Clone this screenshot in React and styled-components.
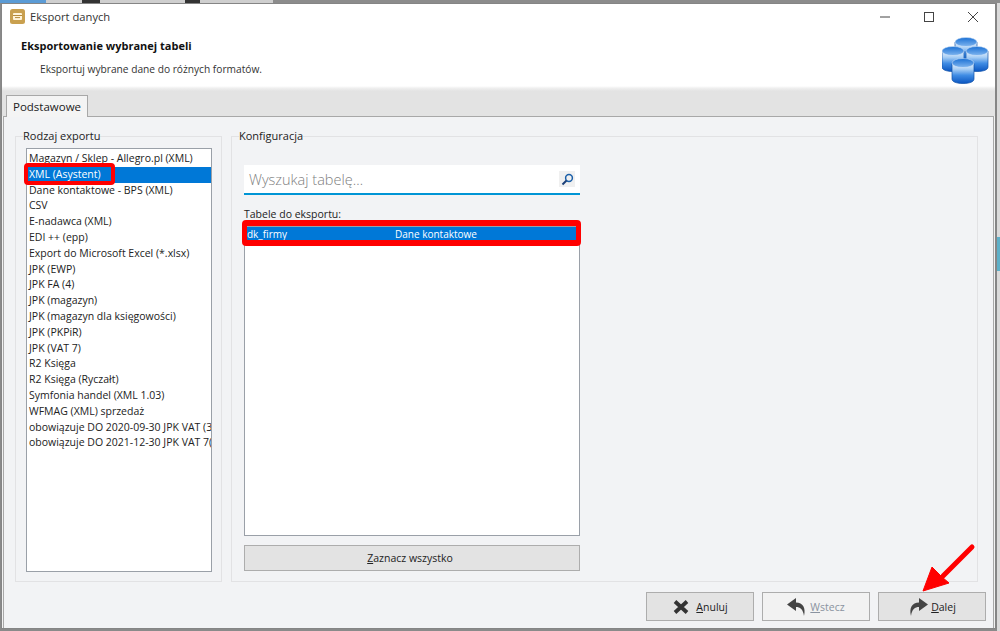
import React from 'react'
import styled, { createGlobalStyle } from 'styled-components'

const GlobalStyle = createGlobalStyle`
  html, body { margin: 0; padding: 0; }
  body {
    width: 1000px;
    height: 631px;
    overflow: hidden;
    background: #e6e6e6;
    font-family: "Open Sans", "Noto Sans", sans-serif;
    font-size: 10.5px;
    color: #222;
  }
`

// the desktop behind the dialog only shows as thin strips at the edges
const Desk = styled.div`
  position: relative;
  width: 1000px;
  height: 631px;
  box-sizing: border-box;
  padding: 3px 3px 2px 1px;
  background:
    linear-gradient(90deg, #5b9bd5 0 46px, #cfcfcf 46px 82px, #333 82px 100px, #cfcfcf 100px 185px, #333 185px 200px, #cfcfcf 200px 273px, #8c8c8c 273px) top left / 100% 3px no-repeat,
    linear-gradient(#dadada 0 237px, #5eb0c8 237px 271px, #dadada 271px) top right / 3px 100% no-repeat,
    #8a8a8a;
`

const Win = styled.div`
  height: 100%;
  box-sizing: border-box;
  border: 1px solid #858585;
  border-right-width: 2px;
  display: flex;
  flex-direction: column;
  background: #f2f2f2;
`

const Head = styled.div`
  height: 82px;
  flex: none;
  background: #fff;
  display: flex;
  flex-direction: column;
  position: relative;
`

const TitleBar = styled.div`
  height: 25px;
  display: flex;
  align-items: center;
  padding-left: 8px;
  gap: 5px;
  font-size: 11.2px;
  color: #333;
`

const WinControls = styled.div`
  margin-left: auto;
  display: flex;
  align-items: center;
  gap: 32px;
  padding-right: 16px;
`

const HeadTitle = styled.div`
  font-weight: 700;
  font-size: 11px;
  padding: 9px 0 0 19px;
  color: #111;
`

const HeadSub = styled.div`
  font-size: 10.2px;
  padding: 9px 0 0 38px;
  color: #333;
`

const DbIcon = styled.svg`
  position: absolute;
  right: 5px;
  top: 29px;
`

const TabStrip = styled.div`
  height: 30px;
  flex: none;
  box-sizing: border-box;
  padding: 5px 0 0 4px;
  background: linear-gradient(#fff 0, #f0f0f0 2px, #e3e3e3 5px);
  display: flex;
  align-items: flex-end;
`

const Tab = styled.div`
  width: 82px;
  height: 22px;
  box-sizing: border-box;
  background: #f4f4f4;
  border: 1px solid #a8a8a8;
  border-bottom: none;
  display: flex;
  align-items: center;
  justify-content: center;
  margin-bottom: -1px;
  position: relative;
  font-size: 11.5px;
`

const Panel = styled.div`
  flex: 1;
  min-height: 0;
  margin: 0 1px 0 1px;
  border: 1px solid #a8a8a8;
  border-bottom: none;
  background: #f2f3f5;
  padding: 13px 7px 0 11px;
  display: flex;
  flex-direction: column;
`

const Groups = styled.div`
  display: flex;
  gap: 9px;
  height: 452px;
  flex: none;
`

const Group = styled.fieldset`
  margin: 0;
  min-width: 0;
  box-sizing: border-box;
  height: 100%;
  border: 1px solid #e2e2e4;
  padding: 0;
  width: ${p => p.$w}px;
  position: relative;
`

const Legend = styled.legend`
  margin-left: 7px;
  padding: 0;
  font-size: 11px;
  line-height: 12px;
  height: 12px;
`

const KindList = styled.div`
  position: relative;
  margin: 6px 9px 9px 10px;
  height: 424px;
  box-sizing: border-box;
  border: 1px solid #9aa0a8;
  background: #fff;
  padding-top: 2px;
`

const KindRow = styled.div`
  height: 15.8px;
  line-height: 15.8px;
  padding-left: 2px;
  white-space: nowrap;
  overflow: hidden;
  background: ${p => (p.$on ? '#0078d7' : 'transparent')};
  color: ${p => (p.$on ? '#fff' : '#222')};
`

const RedBox = styled.div`
  position: absolute;
  border: 4px solid #f00;
  border-radius: 4px;
  box-sizing: border-box;
`

const KindMark = styled(RedBox)`
  left: -3px;
  top: 14px;
  width: 91px;
  height: 22px;
`

const ConfigBody = styled.div`
  padding: 23px 0 0 12px;
  width: 336px;
  display: flex;
  flex-direction: column;
`

const Search = styled.div`
  height: 30px;
  box-sizing: border-box;
  background: #fff;
  border-bottom: 2px solid #0095d5;
  display: flex;
  align-items: center;
  justify-content: space-between;
  padding: 0 5px;
  font-size: 14.5px;
  font-weight: 300;
  color: #808080;
`

const SearchBtn = styled.div`
  width: 16px;
  height: 16px;
  background: #f0f0f0;
  display: flex;
  align-items: center;
  justify-content: center;
`

const TableLabel = styled.div`
  margin-top: 12px;
  height: 15px;
  line-height: 15px;
`

const TableList = styled.div`
  position: relative;
  margin-top: 4px;
  height: 310px;
  box-sizing: border-box;
  border: 1px solid #9aa0a8;
  background: #fff;
`

const TableRow = styled.div`
  height: 14px;
  line-height: 15px;
  overflow: hidden;
  background: #0078d7;
  color: #fff;
  display: flex;
  padding-left: 2px;
  font-size: 10px;
`

const TableName = styled.span`
  width: 148px;
`

const TableMark = styled(RedBox)`
  left: -3px;
  top: -7px;
  width: 339px;
  height: 26px;
  border-width: 6px 5px;
`

const WideBtn = styled.div`
  margin-top: 9px;
  height: 26px;
  box-sizing: border-box;
  background: #e3e3e3;
  border: 1px solid #adadad;
  display: flex;
  align-items: center;
  justify-content: center;
  padding-right: 4px;
`

const Footer = styled.div`
  display: flex;
  justify-content: flex-end;
  gap: 8px;
  padding-top: 10px;
`

const FootBtn = styled.div`
  width: 108px;
  height: 29px;
  box-sizing: border-box;
  border: 1px solid #adadad;
  background: ${p => (p.$off ? '#f2f2f2' : '#e3e3e3')};
  color: ${p => (p.$off ? '#8a93a0' : '#222')};
  display: flex;
  align-items: center;
  justify-content: center;
  gap: 3px;
`

const CancelIcon = styled.svg`
  margin-right: 3px;
`

const WinBtnIcon = styled.svg`
  display: block;
`

const Arrow = styled.svg`
  position: absolute;
  left: 918px;
  top: 540px;
`

const kinds = [
  'Magazyn / Sklep - Allegro.pl (XML)',
  'XML (Asystent)',
  'Dane kontaktowe - BPS (XML)',
  'CSV',
  'E-nadawca (XML)',
  'EDI ++ (epp)',
  'Export do Microsoft Excel (*.xlsx)',
  'JPK (EWP)',
  'JPK FA (4)',
  'JPK (magazyn)',
  'JPK (magazyn dla księgowości)',
  'JPK (PKPiR)',
  'JPK (VAT 7)',
  'R2 Księga',
  'R2 Księga (Ryczałt)',
  'Symfonia handel (XML 1.03)',
  'WFMAG (XML) sprzedaż',
  'obowiązuje DO 2020-09-30 JPK VAT (3)',
  'obowiązuje DO 2021-12-30 JPK VAT 7(',
]

function Barrel({ x, y }) {
  return (
    <g transform={`translate(${x} ${y})`}>
      <path d="M0 5v16c0 3 5 4.500 11 4.500s11-1.500 11-4.500V5z" fill="url(#barrel)" stroke="#0f50a8" strokeWidth=".7" />
      <ellipse cx="11" cy="5" rx="11" ry="4.500" fill="url(#barrelTop)" stroke="#dcebfa" strokeWidth=".5" />
    </g>
  )
}

function DatabaseIcon() {
  return (
    <DbIcon width="48" height="52" viewBox="0 0 48 52">
      <defs>
        <linearGradient id="barrel" x1="0" x2="0" y1="0" y2="1">
          <stop offset="0" stopColor="#e4effb" />
          <stop offset=".3" stopColor="#a9cff5" />
          <stop offset=".6" stopColor="#3f8ce4" />
          <stop offset="1" stopColor="#0a55c0" />
        </linearGradient>
        <linearGradient id="barrelTop" x1="0" x2="0" y1="0" y2="1">
          <stop offset="0" stopColor="#1a70d4" />
          <stop offset="1" stopColor="#7fb5ef" />
        </linearGradient>
      </defs>
      <Barrel x={13} y={4} />
      <Barrel x={0} y={13} />
      <Barrel x={24} y={13} />
      <Barrel x={10} y={25} />
    </DbIcon>
  )
}

export default function App() {
  return (
    <Desk>
      <GlobalStyle />
      <Win>
        <Head>
          <TitleBar>
            <svg width="15" height="15" viewBox="0 0 15 15">
              <rect width="15" height="15" rx="2.500" fill="#c9a04f" />
              <rect x="3" y="4" width="9" height="7" rx="1" fill="#fff3d8" />
              <path d="M3 6.500h9M5 8.600h5" stroke="#b58a3a" strokeWidth="1" />
            </svg>
            Eksport danych
            <WinControls>
              <WinBtnIcon width="12" height="12" viewBox="0 0 12 12">
                <path d="M1 6h10" stroke="#444" strokeWidth="1" />
              </WinBtnIcon>
              <WinBtnIcon width="12" height="12" viewBox="0 0 12 12">
                <rect x="1.500" y="1.500" width="9" height="9" fill="none" stroke="#444" />
              </WinBtnIcon>
              <WinBtnIcon width="12" height="12" viewBox="0 0 12 12">
                <path d="M1 1l10 10M11 1L1 11" stroke="#444" strokeWidth="1" />
              </WinBtnIcon>
            </WinControls>
          </TitleBar>
          <HeadTitle>Eksportowanie wybranej tabeli</HeadTitle>
          <HeadSub>Eksportuj wybrane dane do różnych formatów.</HeadSub>
          <DatabaseIcon />
        </Head>
        <TabStrip>
          <Tab>Podstawowe</Tab>
        </TabStrip>
        <Panel>
          <Groups>
            <Group $w={207}>
              <Legend>Rodzaj exportu</Legend>
              <KindList>
                {kinds.map((k, i) => (
                  <KindRow key={k} $on={i === 1}>{k}</KindRow>
                ))}
                <KindMark />
              </KindList>
            </Group>
            <Group $w={747}>
              <Legend>Konfiguracja</Legend>
              <ConfigBody>
                <Search>
                  Wyszukaj tabelę…
                  <SearchBtn>
                    <svg width="13" height="13" viewBox="0 0 13 13">
                      <circle cx="8" cy="5" r="3.400" fill="none" stroke="#1b5fa8" strokeWidth="1.500" />
                      <path d="M5.500 7.500L1.500 11.500" stroke="#1b3f78" strokeWidth="2" />
                    </svg>
                  </SearchBtn>
                </Search>
                <TableLabel>Tabele do eksportu:</TableLabel>
                <TableList>
                  <TableRow>
                    <TableName>dk_firmy</TableName>
                    <span>Dane kontaktowe</span>
                  </TableRow>
                  <TableMark />
                </TableList>
                <WideBtn><span><u>Z</u>aznacz wszystko</span></WideBtn>
              </ConfigBody>
            </Group>
          </Groups>
          <Footer>
            <FootBtn>
              <CancelIcon width="18" height="16" viewBox="0 0 18 16">
                <path d="M3 2.500l12 11M15 2.500l-12 11" stroke="#333" strokeWidth="3.800" />
              </CancelIcon>
              <span><u>A</u>nuluj</span>
            </FootBtn>
            <FootBtn $off>
              <svg width="20" height="18" viewBox="0 0 20 18">
                <path d="M9 0L0 6.500 9 13V9c4 0 7 2 8 9 2-8-1-13.500-8-13.500z" fill="#444" />
              </svg>
              <span><u>W</u>stecz</span>
            </FootBtn>
            <FootBtn>
              <svg width="20" height="18" viewBox="0 0 20 18">
                <path d="M11 0l9 6.500L11 13V9c-4 0-7 2-8 9-2-8 1-13.500 8-13.500z" fill="#444" />
              </svg>
              <span><u>D</u>alej</span>
            </FootBtn>
          </Footer>
        </Panel>
      </Win>
      <Arrow width="60" height="56" viewBox="0 0 60 56">
        <path d="M54 7L25 36" stroke="#f00" strokeWidth="5" strokeLinecap="round" />
        <path d="M14 27L5 51 31 43 24 37z" fill="#f00" stroke="#f00" strokeWidth="1" strokeLinejoin="round" />
      </Arrow>
    </Desk>
  )
}
